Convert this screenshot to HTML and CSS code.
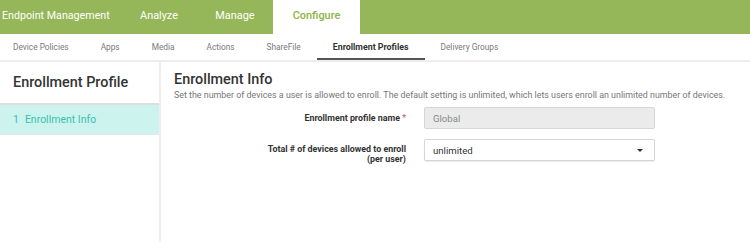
FILE: index.html
```html
<!DOCTYPE html>
<html lang="en">

<head>
    <meta charset="UTF-8">
    <title>Enrollment Profiles</title>
    <link rel="stylesheet" href="styles.css">
</head>

<body>

    <header class="topbar">
        <div class="brand">Endpoint Management</div>
        <nav class="main-nav">
            <a href="#">Analyze</a>
            <a href="#">Manage</a>
            <a href="#" class="active">Configure</a>
        </nav>
    </header>

    <nav class="sub-nav">
        <a href="#">Device Policies</a>
        <a href="#">Apps</a>
        <a href="#">Media</a>
        <a href="#">Actions</a>
        <a href="#">ShareFile</a>
        <a href="#" class="active">Enrollment Profiles</a>
        <a href="#">Delivery Groups</a>
    </nav>

    <div class="page">
        <aside class="side">
            <h2>Enrollment Profile</h2>
            <ul class="steps">
                <li class="current"><span class="num">1</span>Enrollment Info</li>
            </ul>
        </aside>

        <main class="content">
            <h1>Enrollment Info</h1>
            <p class="intro">Set the number of devices a user is allowed to enroll. The default setting is unlimited, which lets users enroll an unlimited number of devices.</p>

            <div class="form-row">
                <label for="profileName">Enrollment profile name <span class="req">*</span></label>
                <input type="text" id="profileName" value="Global" disabled>
            </div>

            <div class="form-row">
                <label for="deviceCount">Total # of devices allowed to enroll<br>(per user)</label>
                <div class="select" id="deviceCount">
                    <span>unlimited</span>
                    <span class="caret"></span>
                </div>
            </div>
        </main>
    </div>

</body>

</html>
```

FILE: styles.css
```css
* {
    margin: 0;
    padding: 0;
    box-sizing: border-box;
}

body {
    font-family: 'Roboto', sans-serif;
    color: #333;
    background: #fff;
    height: 242px;
    display: flex;
    flex-direction: column;
}

a {
    text-decoration: none;
}

/* top bar */
.topbar {
    background: #95b759;
    height: 34px;
    flex-shrink: 0;
    display: flex;
}

.brand {
    color: #fff;
    font-size: 10.7px;
    line-height: 31px;
    padding-left: 2px;
    width: 121px;
    white-space: nowrap;
}

.main-nav {
    display: flex;
}

.main-nav a {
    color: #fff;
    font-size: 10.9px;
    line-height: 31px;
    width: 76px;
    text-align: center;
}

.main-nav a.active {
    width: 87px;
    background: #fff;
    color: #8cb543;
    font-weight: 500;
}

/* second level nav */
.sub-nav {
    display: flex;
    height: 28px;
    flex-shrink: 0;
    border-bottom: 2px solid #eee;
}

.sub-nav a {
    color: #7a7a7a;
    font-size: 8.3px;
    line-height: 26px;
    padding: 0 16px;
    white-space: nowrap;
}

.sub-nav a:first-child {
    padding-left: 13px;
}

.sub-nav a.active {
    color: #333;
    font-weight: 700;
    font-size: 8.8px;
    border-bottom: 2px solid #555;
}

/* page */
.page {
    flex: 1;
    display: flex;
}

.side {
    width: 161px;
    flex-shrink: 0;
    border-right: 2px solid #eee;
}

.side h2 {
    font-size: 14.4px;
    font-weight: 500;
    height: 43px;
    line-height: 41px;
    padding-left: 13px;
    border-bottom: 2px solid #dedede;
}

.steps {
    list-style: none;
}

.steps li {
    font-size: 10.5px;
    height: 30px;
    line-height: 29px;
    padding-left: 13px;
    color: #3cbfae;
    border-bottom: 1px solid #e6e6e6;
}

.steps li.current {
    background: #cdf3ee;
}

.steps .num {
    margin-right: 6px;
}

.content {
    flex: 1;
    padding: 9px 0 0 13px;
}

.content h1 {
    font-size: 14.4px;
    font-weight: 500;
    line-height: 18px;
}

.intro {
    font-size: 8.9px;
    color: #777;
    line-height: 12px;
    white-space: nowrap;
    margin-bottom: 6px;
}

.form-row {
    display: flex;
    align-items: flex-start;
    margin-bottom: 10px;
}

.form-row label {
    width: 232px;
    flex-shrink: 0;
    text-align: right;
    font-size: 8.9px;
    font-weight: 700;
    line-height: 10px;
    padding-top: 6px;
    margin-right: 18px;
}

.form-row:last-child label {
    padding-top: 5px;
}

.req {
    color: #e0485c;
    font-weight: 400;
}

.form-row input,
.select {
    width: 231px;
    height: 22px;
    border: 1px solid #d6d6d6;
    border-radius: 2px;
    font-family: inherit;
    font-size: 9.6px;
    padding: 0 8px;
    color: #333;
}

.form-row input {
    background: #ebebeb;
    color: #888;
}

.select {
    display: flex;
    align-items: center;
    justify-content: space-between;
    background: #fff;
    box-shadow: 0 1px 1px rgba(0, 0, 0, 0.08);
}

.caret {
    width: 0;
    height: 0;
    border-left: 3px solid transparent;
    border-right: 3px solid transparent;
    border-top: 3px solid #333;
    margin-right: 3px;
}
```
